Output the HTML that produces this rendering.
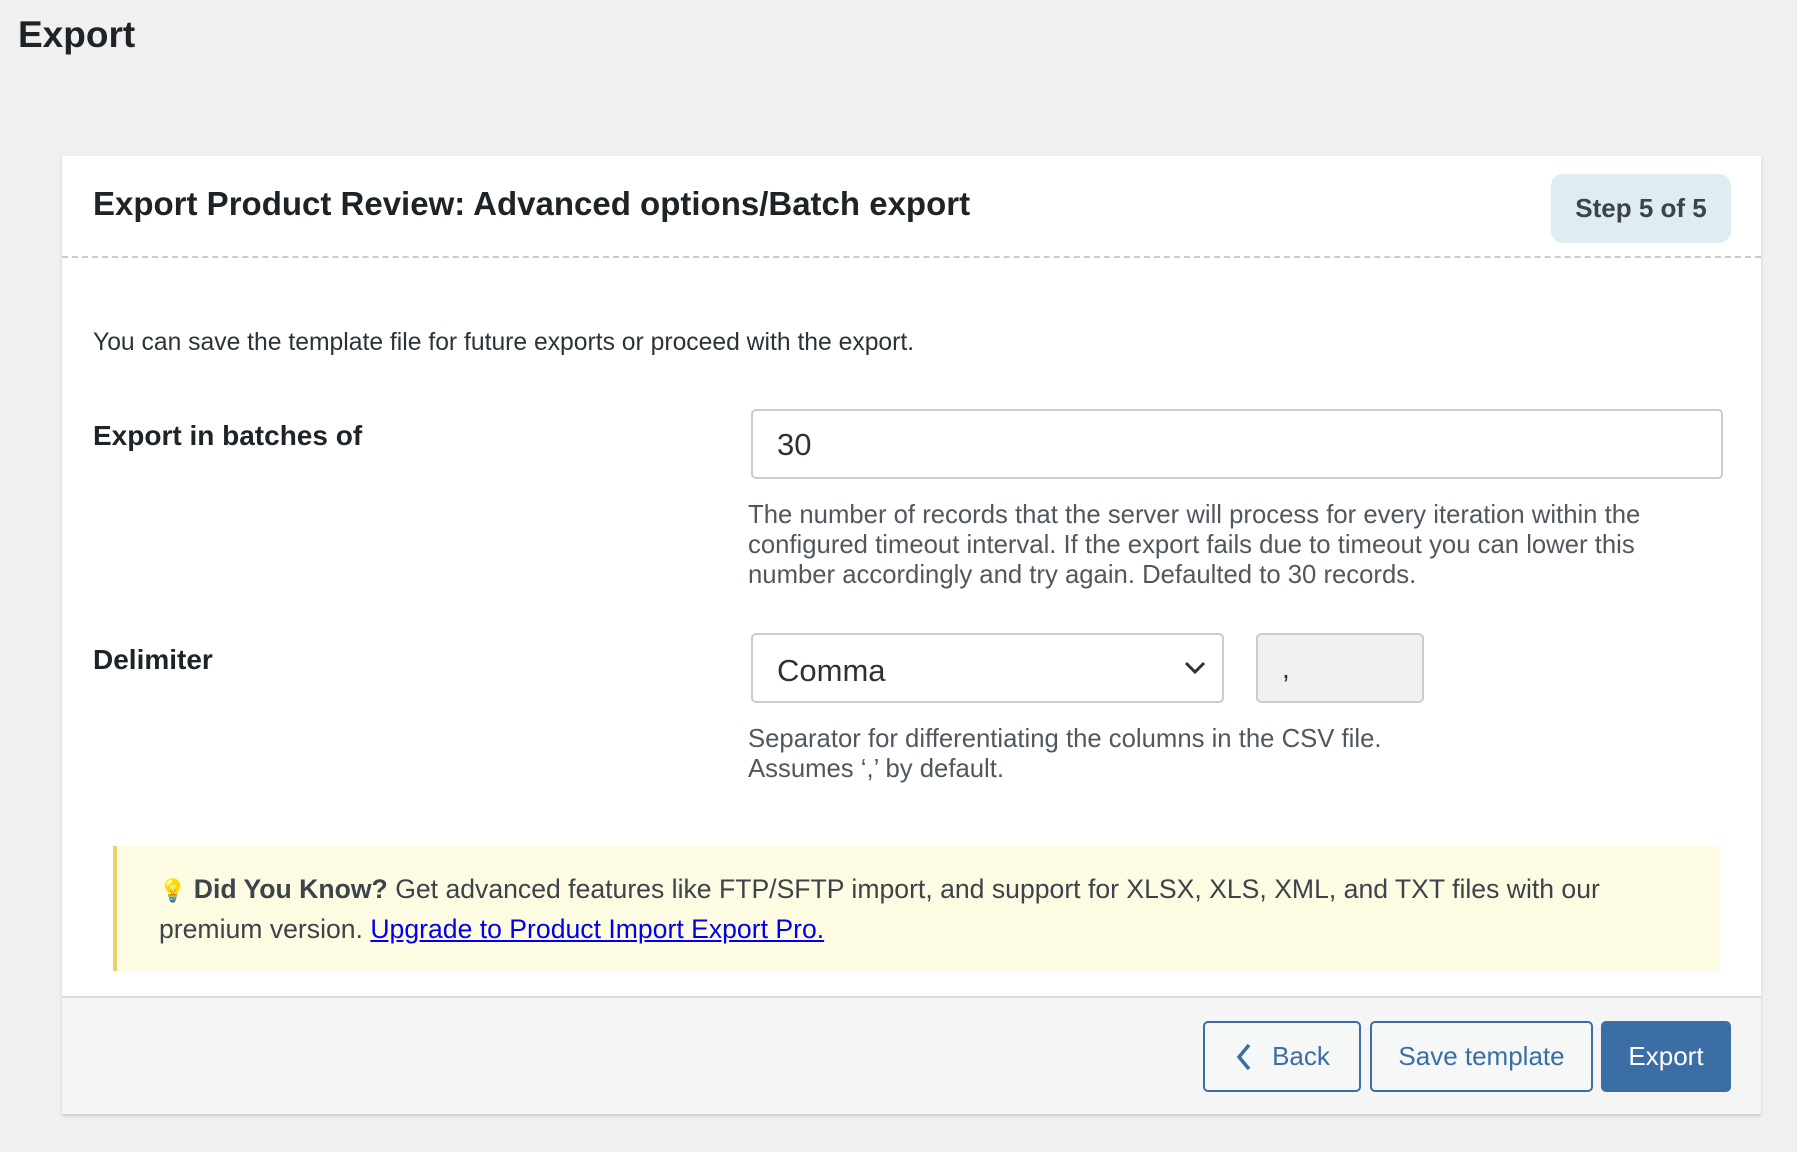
<!DOCTYPE html>
<html><head><meta charset="utf-8">
<style>
*{box-sizing:border-box;margin:0;padding:0}
body{width:1797px;height:1152px;background:#f0f0f1;font-family:"Liberation Sans",sans-serif;color:#1d2327;position:relative;overflow:hidden}
.a{position:absolute;white-space:nowrap}
#card{position:absolute;left:62px;top:156px;width:1699px;height:958px;background:#fff;box-shadow:0 2px 3px rgba(0,0,0,.15)}
.help{color:#50575e;font-size:25.7px;line-height:30px}
.btn{position:absolute;top:1021px;height:71px;border:2px solid #3a6ea5;border-radius:5px;color:#3a6ea5;font-size:26px;display:flex;align-items:center;justify-content:center;background:#f6f7f7}
</style></head><body>
<div class="a" style="left:18px;top:14px;font-size:37px;font-weight:600;color:#1d2327">Export</div>
<div id="card"></div>
<div class="a" style="left:93px;top:185px;font-size:33px;font-weight:bold;color:#1d2327">Export Product Review: Advanced options/Batch export</div>
<div class="a" style="left:1551px;top:174px;width:180px;height:69px;background:#dfedf2;border-radius:12px;font-size:26px;font-weight:bold;color:#3c434a;display:flex;align-items:center;justify-content:center">Step 5 of 5</div>
<div class="a" style="left:62px;top:256px;width:1699px;border-top:2px dashed #ccc"></div>
<div class="a" style="left:93px;top:329px;font-size:24.7px;color:#2c3338">You can save the template file for future exports or proceed with the export.</div>
<div class="a" style="left:93px;top:420px;font-size:28px;font-weight:bold">Export in batches of</div>
<div class="a" style="left:751px;top:409px;width:972px;height:70px;border:2px solid #ccc;border-radius:5px;font-size:31px;color:#2c3338;padding:17px 24px;line-height:34px">30</div>
<div class="a help" style="left:748px;top:500px">The number of records that the server will process for every iteration within the<br>configured timeout interval. If the export fails due to timeout you can lower this<br>number accordingly and try again. Defaulted to 30 records.</div>
<div class="a" style="left:93px;top:644px;font-size:28px;font-weight:bold">Delimiter</div>
<div class="a" style="left:751px;top:633px;width:473px;height:70px;border:2px solid #ccc;border-radius:5px;font-size:31px;color:#2c3338;padding:19px 24px;line-height:34px">Comma
<svg style="position:absolute;right:14px;top:24px" width="26" height="18" viewBox="0 0 26 18"><path d="M4 4l9 9 9-9" fill="none" stroke="#2c3338" stroke-width="3"/></svg></div>
<div class="a" style="left:1256px;top:633px;width:168px;height:70px;border:2px solid #ccc;border-radius:5px;background:#f0f0f1;font-size:28px;color:#2c3338;padding:18px 24px">,</div>
<div class="a help" style="left:748px;top:724px">Separator for differentiating the columns in the CSV file.<br>Assumes ‘,’ by default.</div>
<div class="a" style="left:113px;top:846px;width:1606px;height:125px;background:#fefbe3;border-left:4px solid #e6d36e"></div>
<div class="a" style="left:159px;top:870px;font-size:26.6px;line-height:38px;color:#3c434a"><span style="color:#f5c94a;font-size:22px">💡</span><b style="color:#3c434a"> Did You Know?</b> Get advanced features like FTP/SFTP import, and support for XLSX, XLS, XML, and TXT files with our<br>premium version. <span style="color:#0000ee;text-decoration:underline">Upgrade to Product Import Export Pro.</span></div>
<div class="a" style="left:62px;top:996px;width:1699px;height:118px;background:#f5f5f5;border-top:2px solid #dcdcde"></div>
<div class="btn" style="left:1203px;width:158px"><svg width="20" height="30" viewBox="0 0 20 30" style="margin-right:18px"><path d="M15 3L5 15l10 12" fill="none" stroke="#3a6ea5" stroke-width="3.5"/></svg>Back</div>
<div class="btn" style="left:1370px;width:223px">Save template</div>
<div class="btn" style="left:1601px;width:130px;background:#3a6ea5;color:#fff">Export</div>
</body></html>
